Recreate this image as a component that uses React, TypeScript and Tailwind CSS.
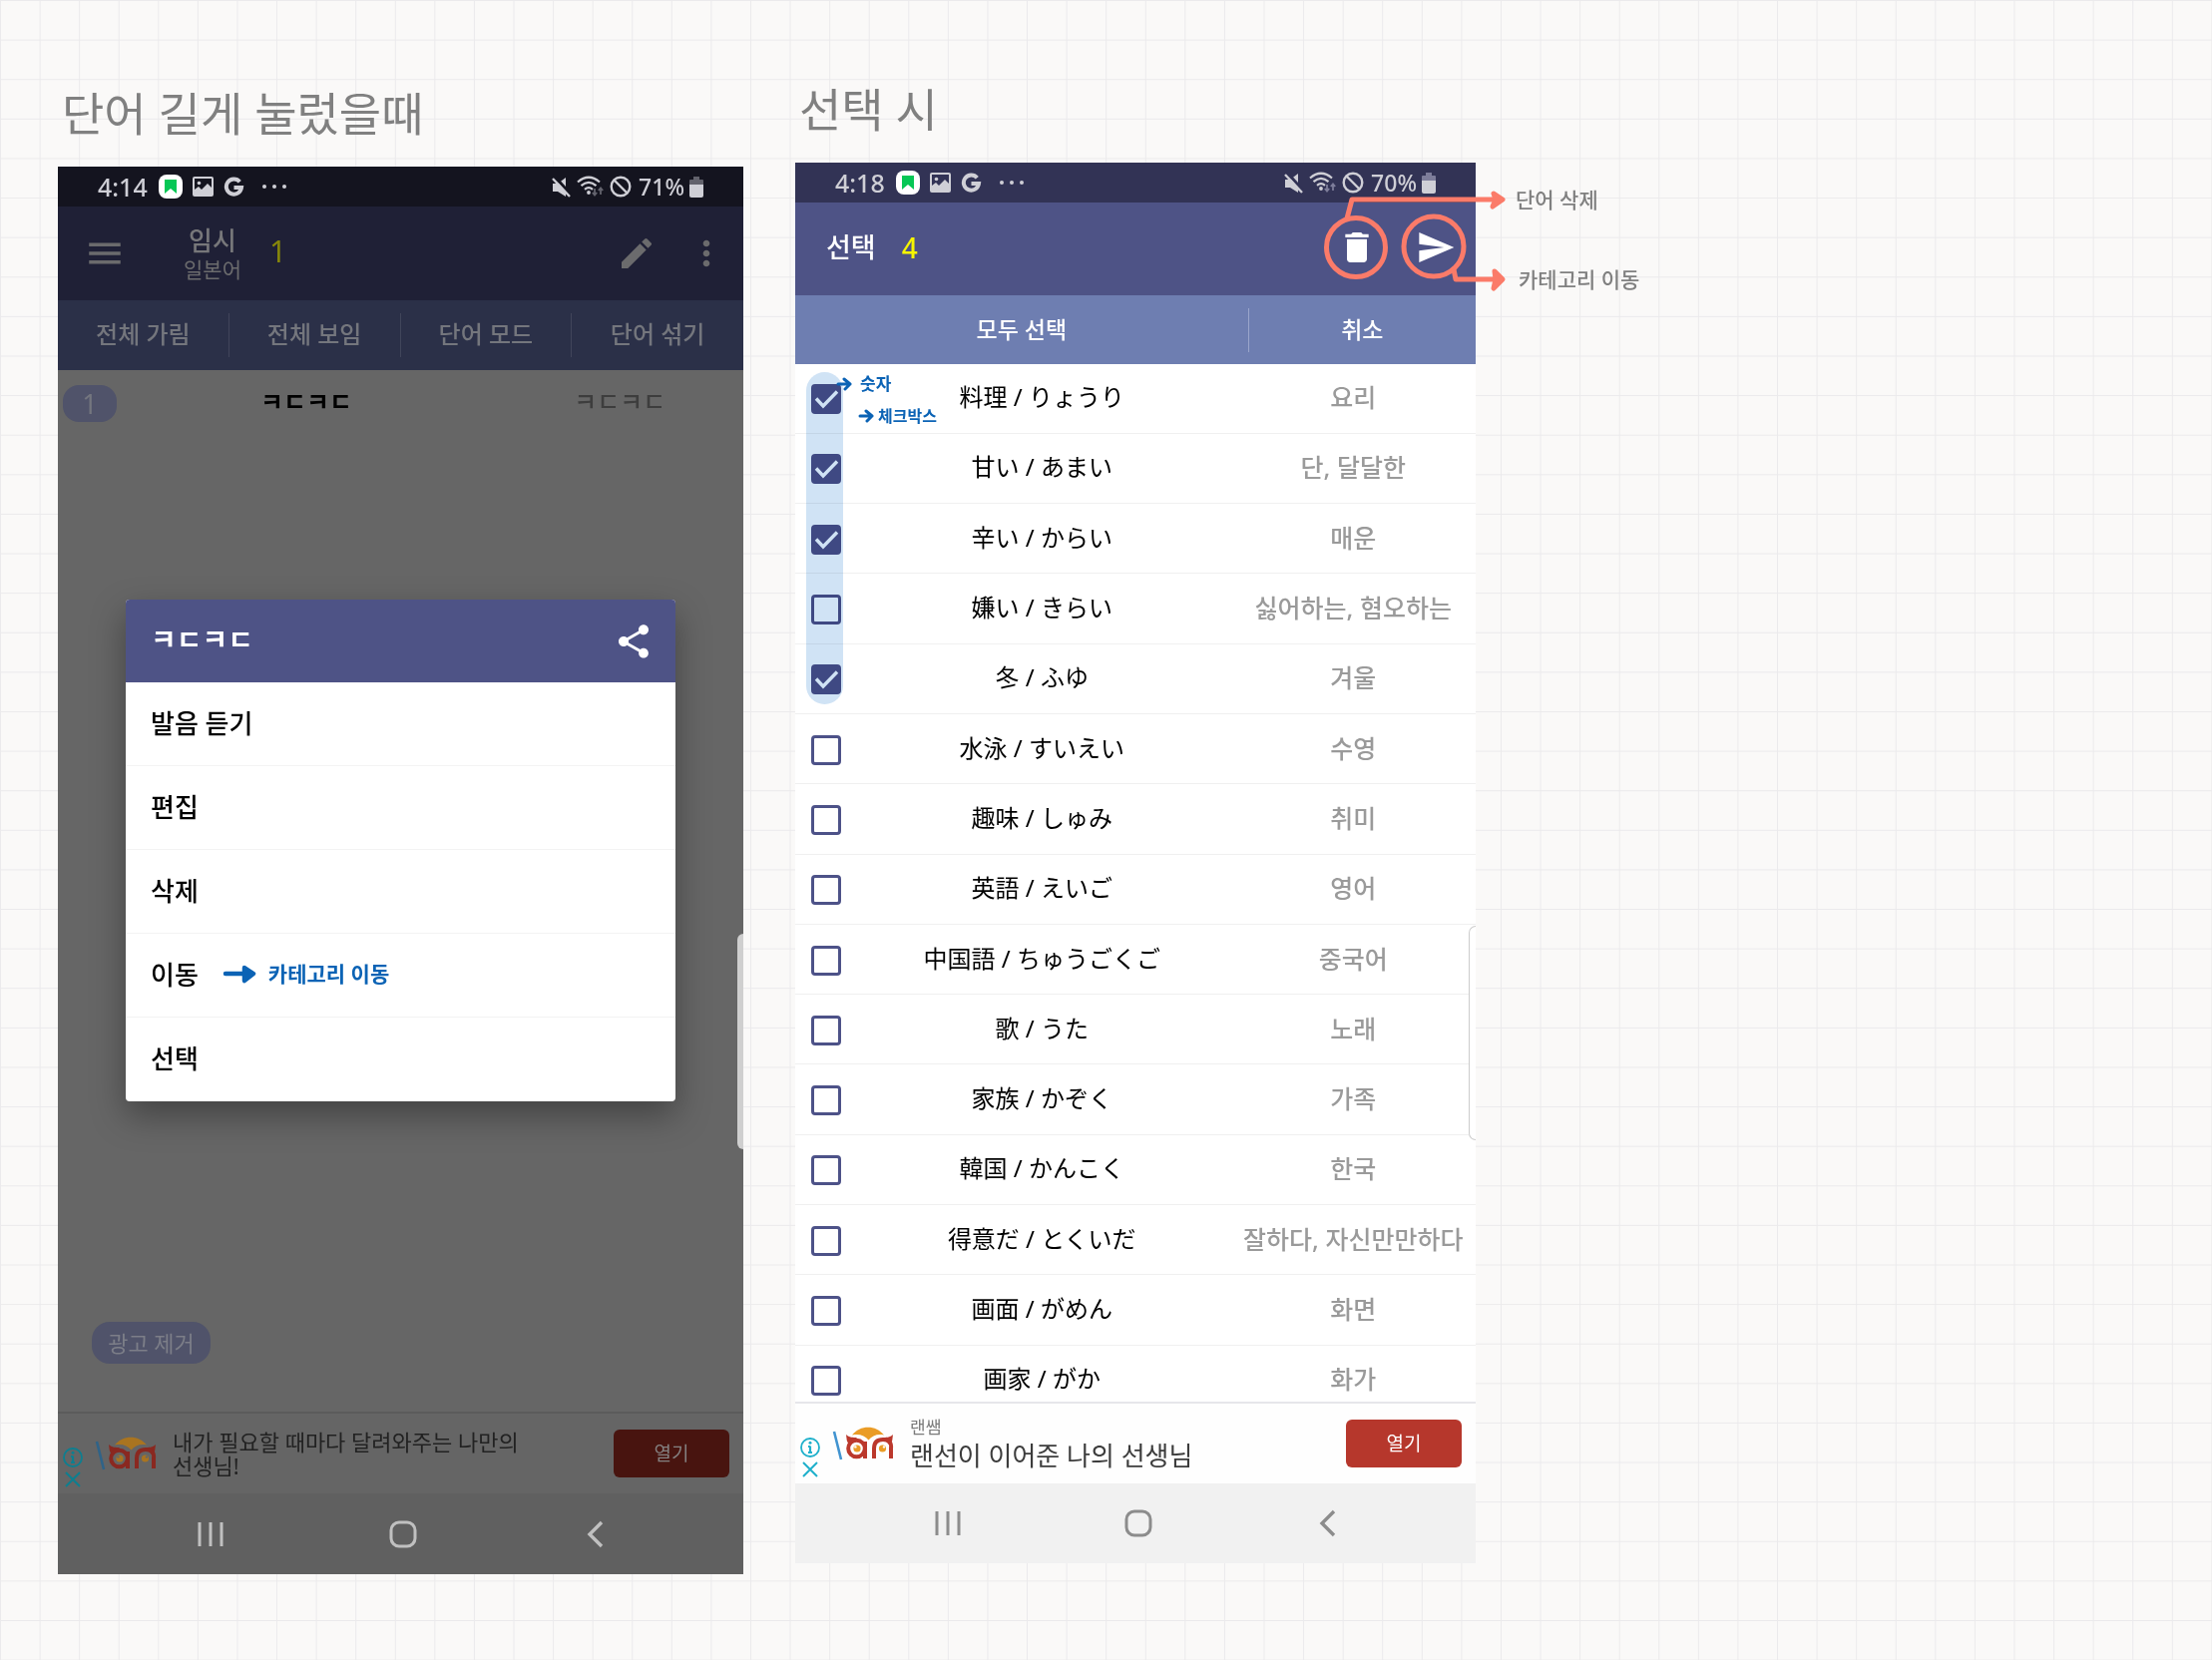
import React from 'react';
import { MdDelete, MdEdit, MdMenu, MdMoreVert, MdSend, MdShare } from 'react-icons/md';

type Tone = 'dim' | 'light';

const words: { word: string; meaning: string; checked?: boolean }[] = [
  { word: '料理 / りょうり', meaning: '요리', checked: true },
  { word: '甘い / あまい', meaning: '단, 달달한', checked: true },
  { word: '辛い / からい', meaning: '매운', checked: true },
  { word: '嫌い / きらい', meaning: '싫어하는, 혐오하는' },
  { word: '冬 / ふゆ', meaning: '겨울', checked: true },
  { word: '水泳 / すいえい', meaning: '수영' },
  { word: '趣味 / しゅみ', meaning: '취미' },
  { word: '英語 / えいご', meaning: '영어' },
  { word: '中国語 / ちゅうごくご', meaning: '중국어' },
  { word: '歌 / うた', meaning: '노래' },
  { word: '家族 / かぞく', meaning: '가족' },
  { word: '韓国 / かんこく', meaning: '한국' },
  { word: '得意だ / とくいだ', meaning: '잘하다, 자신만만하다' },
  { word: '画面 / がめん', meaning: '화면' },
  { word: '画家 / がか', meaning: '화가' },
];

const tabs = ['전체 가림', '전체 보임', '단어 모드', '단어 섞기'];
const menu = ['발음 듣기', '편집', '삭제', '이동', '선택'];

function StatusBar({ time, battery, tone }: { time: string; battery: string; tone: Tone }) {
  const hole = tone === 'dim' ? '#14141f' : '#323355';
  const faint = tone === 'dim' ? '#62626c' : '#7d7d9a';
  return (
    <div
      className={
        'flex h-10 items-center justify-between px-10 text-[#cfcfd6] ' +
        (tone === 'dim' ? 'bg-[#14141f]' : 'bg-[#323355]')
      }
    >
      <div className="flex items-center gap-[10px]">
        <span className="w-[51px] text-[25px] leading-8 font-medium">{time}</span>
        <svg width="24" height="24" viewBox="0 0 24 24">
          <rect width="24" height="24" rx="8" fill="#fff" />
          <path d="M6 5h12v14l-6-5-6 5z" fill="#06c755" />
        </svg>
        <svg width="21" height="20" viewBox="0 0 21 20" fill="none" stroke="currentColor">
          <rect x="1" y="1" width="19" height="18" rx="1" strokeWidth="2" />
          <circle cx="6.5" cy="6.5" r="1.8" fill="currentColor" stroke="none" />
          <path d="M2 18v-5l4-3 3 3 6-6 4 4v7z" fill="currentColor" stroke="none" />
        </svg>
        <svg width="21" height="20" viewBox="0 0 21 20" fill="none" stroke="currentColor" strokeWidth="4">
          <path d="M16.3 5.2A7.6 7.6 0 1 0 18 11H10.5" />
        </svg>
        <svg className="ml-2" width="24" height="4" viewBox="0 0 24 4" fill="currentColor">
          <circle cx="2" cy="2" r="2" />
          <circle cx="12" cy="2" r="2" />
          <circle cx="22" cy="2" r="2" />
        </svg>
      </div>
      <div className="flex items-center gap-[5px]">
        <svg width="20" height="21" viewBox="0 0 20 21">
          <path d="M1 7h5l8-6v19l-8-5H1z" fill="currentColor" />
          <path d="M3 0L20 19" stroke={hole} strokeWidth="3" />
          <path d="M1 2L18 20" stroke="currentColor" strokeWidth="2.4" />
        </svg>
        <svg width="28" height="22" viewBox="0 0 28 22" fill="none" stroke="currentColor" strokeWidth="2.2">
          <path d="M1 6.5Q12 -3 23 6.5M4.5 10.2Q12 3.600 19.500 10.200M8 13.800Q12 10.500 16 13.800" />
          <circle cx="12" cy="17" r="1.900" fill="currentColor" stroke="none" />
          <path d="M18 13v6M15.800 17l2.200 2.600 2.200-2.600M24 19v-6M21.800 15l2.200-2.600 2.200 2.600" stroke={faint} strokeWidth="1.800" />
        </svg>
        <svg width="22" height="22" viewBox="0 0 22 22" fill="none" stroke="currentColor" strokeWidth="2.400">
          <circle cx="11" cy="11" r="9.300" />
          <path d="M4.500 4.500l13 13" />
        </svg>
        <span className="ml-[2px] text-[23px] leading-8 font-medium">{battery}</span>
        <svg width="14" height="21" viewBox="0 0 14 21">
          <path d="M4 0h6v3h3q1 0 1 1v4H0V4q0-1 1-1h3z" fill={faint} />
          <path d="M0 8h14v11q0 2-2 2H2q-2 0-2-2z" fill="currentColor" />
        </svg>
      </div>
    </div>
  );
}

function AdLogo({ tone }: { tone: Tone }) {
  const dim = tone === 'dim';
  const red = dim ? '#8a2820' : '#bb382c';
  const orange = dim ? '#a97420' : '#ea9c26';
  const blue = dim ? '#2f6388' : '#4193d0';
  const pupil = dim ? '#666' : '#fff';
  return (
    <svg width="62" height="34" viewBox="0 0 62 34" fill="none">
      <path d="M2 5L9 33" stroke={blue} strokeWidth="2.600" />
      <path d="M20 8.500C28 -2 44 -2 52 8.500C46 7 40 9 36.500 13.500C33 9 27 7 20 8.500z" fill={orange} />
      <path d="M14 8c3 3 7 3 11 3l-8 8q-3-5-3-11z" fill={red} />
      <circle cx="24.500" cy="22" r="8.300" stroke={red} strokeWidth="4" />
      <path d="M33 15v17" stroke={red} strokeWidth="4" />
      <circle cx="25" cy="22" r="3.600" fill={orange} />
      <circle cx="23.400" cy="20.400" r="1.200" fill={pupil} />
      <path d="M61 8c-3 3-7 3-11 3l8 8q3-5 3-11z" fill={red} />
      <path d="M42 32V22q0-9 9-9t8 9v10" stroke={red} strokeWidth="4" />
      <circle cx="50.500" cy="22" r="3.600" fill={orange} />
      <circle cx="52" cy="20.400" r="1.200" fill={pupil} />
    </svg>
  );
}

function AdBar({ tone, children }: { tone: Tone; children: React.ReactNode }) {
  const dim = tone === 'dim';
  return (
    <div
      className={
        'flex h-[82px] items-center border-t-2 pr-[14px] pl-[5px] ' +
        (dim ? 'border-[#5b5b5b] bg-[#656565]' : 'border-[#e6e6ea] bg-[#fefefe]')
      }
    >
      <div className={'flex flex-col items-center gap-1 pt-7 ' + (dim ? 'text-[#0d7f90]' : 'text-[#1fb0cb]')}>
        <a href="#ad-info" aria-label="광고 정보">
          <svg width="20" height="20" viewBox="0 0 20 20" fill="none" stroke="currentColor">
            <circle cx="10" cy="10" r="9" strokeWidth="1.800" />
            <path d="M10 8.500V15.500M8 9h2M8 15h4" strokeWidth="2.200" />
            <circle cx="10" cy="5.300" r="1.500" fill="currentColor" stroke="none" />
          </svg>
        </a>
        <button aria-label="광고 닫기">
          <svg width="16" height="16" viewBox="0 0 16 16" fill="none" stroke="currentColor" strokeWidth="2">
            <path d="M1 1l14 14M15 1L1 15" />
          </svg>
        </button>
      </div>
      <div className="ml-3">
        <AdLogo tone={tone} />
      </div>
      <div className="ml-4 max-w-[400px] break-keep">{children}</div>
      <button
        className={
          'ml-auto h-12 w-[116px] rounded-md text-[19px] ' +
          (dim ? 'bg-[#48140f] text-[#848080]' : 'bg-[#b6372c] text-white')
        }
      >
        열기
      </button>
    </div>
  );
}

function NavBar({ tone }: { tone: Tone }) {
  return (
    <nav
      className={
        'flex items-center justify-between pr-[134px] pl-[139px] ' +
        (tone === 'dim' ? 'h-[81px] bg-[#606060] text-[#c0c0c0]' : 'h-20 bg-[#f1f1f1] text-[#8c8c8c]')
      }
    >
      <button aria-label="최근 앱">
        <svg width="28" height="28" viewBox="0 0 28 28" fill="none" stroke="currentColor" strokeWidth="3">
          <path d="M3 2v24M14 2v24M25 2v24" />
        </svg>
      </button>
      <button aria-label="홈">
        <svg width="28" height="28" viewBox="0 0 28 28" fill="none" stroke="currentColor" strokeWidth="3">
          <rect x="2" y="2" width="24" height="24" rx="8" />
        </svg>
      </button>
      <button aria-label="뒤로">
        <svg width="28" height="28" viewBox="0 0 28 28" fill="none" stroke="currentColor" strokeWidth="3.400">
          <path d="M20 2L8 14l12 12" />
        </svg>
      </button>
    </nav>
  );
}

function WordMenu() {
  return (
    <div
      role="dialog"
      aria-label="ㅋㄷㅋㄷ"
      className="absolute inset-x-[68px] top-[434px] overflow-hidden rounded bg-white shadow-[0_14px_34px_rgba(0,0,0,0.35)]"
    >
      <div className="flex h-[83px] items-center justify-between bg-[#4e5386] pr-[22px] pb-1 pl-[25px] text-white">
        <h2 className="text-[28px] leading-9 font-bold">ㅋㄷㅋㄷ</h2>
        <button aria-label="공유" className="pt-1">
          <MdShare size={40} />
        </button>
      </div>
      <ul className="divide-y divide-[#f3f3f3]">
        {menu.map((item) => (
          <li key={item} className="flex h-[84px] items-center px-[25px]">
            <button className="pb-[2px] text-[26px] leading-9 font-medium text-black">{item}</button>
            {item === '이동' && (
              <span className="ml-6 flex items-center gap-3 pb-1 text-[21px] leading-8 font-bold text-[#0b63b5]">
                <svg width="34" height="20" viewBox="0 0 34 20" fill="none" stroke="currentColor" strokeWidth="4.500" strokeLinecap="round" strokeLinejoin="round">
                  <path d="M3 10h26M22 4l9 6-9 7z" />
                  <path d="M23 6l7 4-7 5z" fill="currentColor" />
                </svg>
                카테고리 이동
              </span>
            )}
          </li>
        ))}
      </ul>
    </div>
  );
}

function LongPressScreen() {
  return (
    <div className="relative bg-[#666666]">
      <StatusBar time="4:14" battery="71%" tone="dim" />
      <header className="flex h-[94px] items-center bg-[#1f2036] pr-[17px] pl-[26px] text-[#6b6b6d]">
        <button aria-label="메뉴">
          <MdMenu size={42} />
        </button>
        <div className="ml-[58px] text-center">
          <h2 className="text-[26px] leading-8 font-medium text-[#77777a]">임시</h2>
          <p className="text-[21px] leading-[26px]">일본어</p>
        </div>
        <span className="ml-7 pb-1 text-[30px] leading-9 text-[#87870a]">1</span>
        <button aria-label="편집" className="ml-auto">
          <MdEdit size={40} />
        </button>
        <button aria-label="더보기" className="ml-[30px]">
          <MdMoreVert size={40} />
        </button>
      </header>
      <div className="grid h-[70px] grid-cols-4 items-center bg-[#2b3048] text-[#74767d]">
        {tabs.map((t) => (
          <button key={t} className="h-11 border-r border-[#41455a] pb-[2px] text-[24px] leading-8 font-medium last:border-r-0">
            {t}
          </button>
        ))}
      </div>
      <div className="flex min-h-[1044px] flex-col justify-between pt-[15px] pb-12">
        <div className="grid grid-cols-[8.5%_55.5%_36%] text-center text-[25px] leading-8">
          <div className="pl-[5px]">
            <span className="flex h-[37px] w-[54px] items-center justify-center rounded-2xl bg-[#50536a] text-[27px] text-[#74767f]">
              1
            </span>
          </div>
          <span className="font-bold text-black">ㅋㄷㅋㄷ</span>
          <span className="font-medium text-[#3d3d3d]">ㅋㄷㅋㄷ</span>
        </div>
        <button className="ml-[34px] flex h-[42px] w-[119px] items-center justify-center self-start rounded-[18px] bg-[#50536a] text-[22px] text-[#7c7e88]">
          광고 제거
        </button>
      </div>
      <AdBar tone="dim">
        <p className="text-[22px] leading-6 text-[#222222]">내가 필요할 때마다 달려와주는 나만의 선생님!</p>
      </AdBar>
      <NavBar tone="dim" />
      <WordMenu />
      <div className="absolute top-[769px] right-0 h-[216px] w-[6px] rounded-l-lg bg-[#cfcfcf]" />
    </div>
  );
}

function WordRow({ word, meaning, checked }: { word: string; meaning: string; checked?: boolean }) {
  return (
    <tr className="border-b border-[#f0f0f0]">
      <td className="w-[8.5%] pt-[2px]">
        <span className="ml-4 grid size-[30px]">
          <input
            type="checkbox"
            aria-label={word}
            defaultChecked={checked}
            className="peer col-start-1 row-start-1 size-[30px] appearance-none rounded-[4px] border-3 border-[#4d5288] checked:bg-[#4d5288]"
          />
          <svg
            className="pointer-events-none invisible col-start-1 row-start-1 peer-checked:visible"
            width="30"
            height="30"
            viewBox="0 0 30 30"
            fill="none"
            stroke="#fff"
            strokeWidth="3.400"
          >
            <path d="M5 14.500l7 7.500L26 7.500" />
          </svg>
        </span>
      </td>
      <td className="w-[55.5%] pb-[2px] text-center text-black">{word}</td>
      <td className="w-[36%] pb-[2px] text-center text-[25px] font-medium whitespace-nowrap text-[#9a9a9a]">{meaning}</td>
    </tr>
  );
}

function HandArrow() {
  return (
    <svg width="16" height="14" viewBox="0 0 16 14" fill="none" stroke="currentColor" strokeWidth="3" strokeLinecap="round" strokeLinejoin="round">
      <path d="M2 7h12M8 2l6 5-5 5" />
    </svg>
  );
}

function SelectScreen() {
  return (
    <div className="relative bg-white">
      <StatusBar time="4:18" battery="70%" tone="light" />
      <header className="flex h-[93px] items-center bg-[#4e5386] pr-5 pb-[3px] pl-[31px] text-white">
        <h2 className="text-[27px] leading-9 font-medium">선택</h2>
        <span className="ml-[26px] text-[28px] leading-9 font-medium text-[#f6f500]">4</span>
        <button aria-label="단어 삭제" className="ml-auto">
          <MdDelete size={40} />
        </button>
        <button aria-label="카테고리 이동" className="ml-[39px]">
          <MdSend size={40} />
        </button>
      </header>
      <div className="grid h-[69px] grid-cols-[2fr_1fr] items-center bg-[#6e7eb1] text-white">
        <button className="h-11 border-r border-[#9aa5cb] pb-[2px] text-[23px] leading-8 font-medium">모두 선택</button>
        <button className="h-11 pb-[2px] text-[23px] leading-8 font-medium">취소</button>
      </div>
      <div className="relative h-[1040px] overflow-hidden">
        <table className="h-[1054px] w-full table-fixed border-collapse text-[24px] leading-8">
          <tbody>
            {words.map((w) => (
              <WordRow key={w.word} {...w} />
            ))}
          </tbody>
        </table>
        <div className="pointer-events-none absolute top-2 left-[11px] h-[333px] w-[37px] rounded-full bg-[#d0e3f5] mix-blend-multiply" />
        <div className="absolute top-2 left-[41px] text-[17px] leading-6 font-bold text-[#0b63b5]">
          <p className="flex items-center gap-2">
            <HandArrow />
            숫자
          </p>
          <p className="mt-2 ml-[22px] flex items-center gap-1 text-[16px]">
            <HandArrow />
            체크박스
          </p>
        </div>
      </div>
      <AdBar tone="light">
        <p className="text-[17px] leading-6 text-[#7a7a7a]">랜쌤</p>
        <p className="text-[26px] leading-8 text-[#3c3c3c]">랜선이 이어준 나의 선생님</p>
      </AdBar>
      <NavBar tone="light" />
      <div className="absolute top-[765px] right-0 h-[215px] w-[7px] rounded-l-lg border border-r-0 border-[#cccccc] bg-white" />
      <svg
        className="pointer-events-none absolute top-[17px] right-[-31px]"
        width="190"
        height="115"
        viewBox="0 0 190 115"
        fill="none"
        stroke="#fb7b69"
        strokeWidth="5"
        strokeLinecap="round"
        strokeLinejoin="round"
      >
        <circle cx="39" cy="68" r="29.500" />
        <circle cx="117" cy="67" r="30" />
        <path d="M30 39l5-19h149" />
        <path d="M177 14l9 6-10 7 3-7z" fill="#fb7b69" />
        <path d="M137 90l2 10h45" />
        <path d="M178 92l8 8-9 9 2-9z" fill="#fb7b69" />
      </svg>
      <p className="absolute top-[21px] left-full ml-10 text-[21px] leading-8 font-medium whitespace-nowrap text-[#808080]">단어 삭제</p>
      <p className="absolute top-[101px] left-full ml-[43px] text-[21px] leading-8 font-medium whitespace-nowrap text-[#808080]">카테고리 이동</p>
    </div>
  );
}

export default function App() {
  return (
    <main className="grid min-h-screen grid-cols-[687fr_682fr_686fr] content-start items-start gap-x-[52px] bg-[#faf9f8] bg-[linear-gradient(to_right,#ebeaec_1px,transparent_1px),linear-gradient(to_bottom,#ebeaec_1px,transparent_1px)] bg-[size:calc(100%/56)_calc(100%/42)] pt-[79px] pb-12 pl-[58px] font-['Noto_Sans','Noto_Sans_CJK_KR','Noto_Sans_CJK_JP',sans-serif]">
      <section className="pt-1">
        <h1 className="mb-6 pl-1 text-[46px] leading-[60px] text-[#808080]">단어 길게 눌렀을때</h1>
        <LongPressScreen />
      </section>
      <section>
        <h1 className="mb-6 pl-1 text-[46px] leading-[60px] text-[#808080]">선택 시</h1>
        <SelectScreen />
      </section>
    </main>
  );
}
